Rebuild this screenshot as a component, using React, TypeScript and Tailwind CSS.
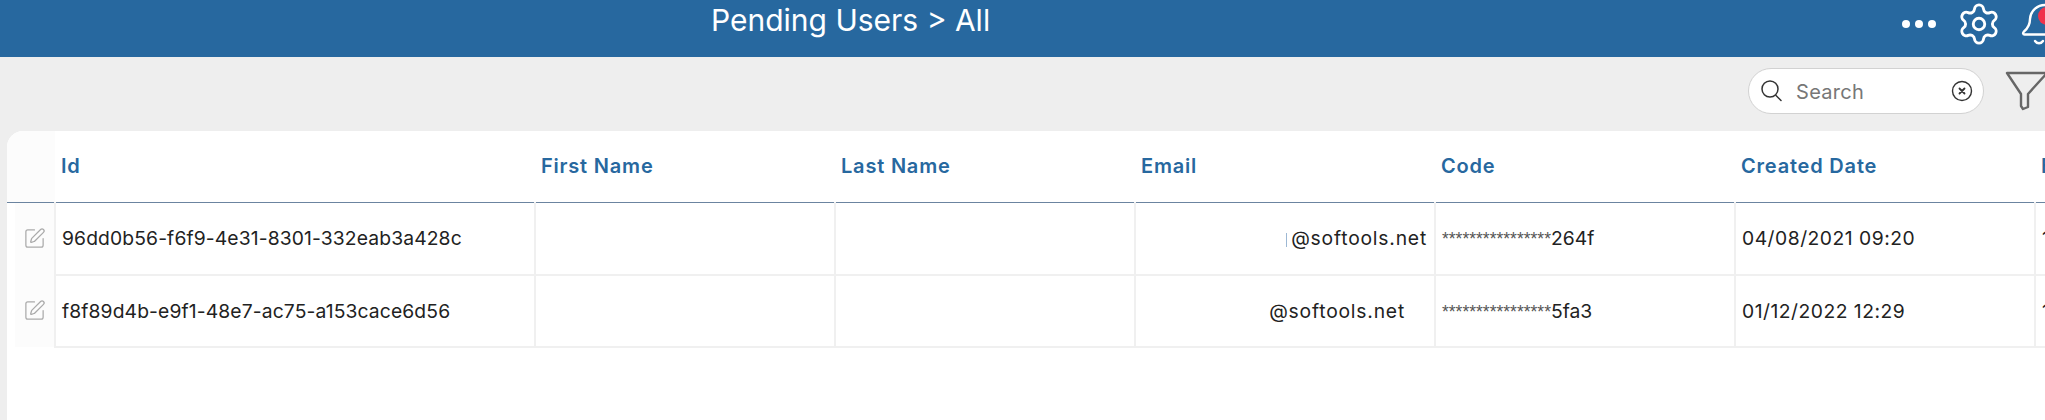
import { Settings, SquarePen } from "lucide-react";

const COLUMNS = ["First Name", "Last Name", "Email", "Code", "Created Date", "Expiry Date"];

const ROWS = [
  { id: "96dd0b56-f6f9-4e31-8301-332eab3a428c", email: "@softools.net", emailPad: "pr-[7px]", mark: true, stars: "****************", code: "264f", created: "04/08/2021 09:20", expiry: "11/08/2021 09:20" },
  { id: "f8f89d4b-e9f1-48e7-ac75-a153cace6d56", email: "@softools.net", emailPad: "pr-[29px]", mark: false, stars: "****************", code: "5fa3", created: "01/12/2022 12:29", expiry: "18/12/2022 12:29" },
];

function TopBar() {
  return (
    <div className="flex h-[57px] items-start overflow-hidden bg-[#27689f] text-white">
      <div className="ml-[711px] w-[1180px] shrink-0 text-[30px] leading-[40px]">Pending Users &gt; All</div>
      <div className="ml-[11px] mt-[20px] flex shrink-0 gap-[5px]">
        <span className="h-[8px] w-[8px] rounded-full bg-white" />
        <span className="h-[8px] w-[8px] rounded-full bg-white" />
        <span className="h-[8px] w-[8px] rounded-full bg-white" />
      </div>
      <Settings className="ml-[20px] mt-[1px] shrink-0" size={46} strokeWidth={1.5} />
      <div className="relative ml-[18px] mt-[1px] h-[48px] w-[44px] shrink-0">
        <svg width="44" height="48" viewBox="0 0 44 48" fill="none" stroke="currentColor" strokeWidth="2.4" strokeLinecap="round" strokeLinejoin="round">
          <path d="M26 4a15 15 0 0 0-16 14c0 7-3 10-6 12.500-1.500 1.500-1 3 .5 3h37" />
          <path d="M15 40c2 3 6 3 8 0" />
        </svg>
        <span className="absolute left-[18px] top-[6px] h-[18px] w-[18px] rounded-full bg-[#f0324b]" />
      </div>
    </div>
  );
}

function Toolbar() {
  return (
    <div className="flex h-[74px] items-start overflow-hidden pl-[1748px] pt-[11px]">
      <div className="flex h-[46px] w-[236px] shrink-0 items-center rounded-full border border-[#d2d2d2] bg-white pl-[11px] pr-[10px]">
        <svg width="22" height="24" viewBox="0 0 22 24" fill="none" stroke="#333" strokeWidth="1.5" strokeLinecap="round">
          <circle cx="10" cy="10" r="8" />
          <path d="M16 16.500l5 5" />
        </svg>
        <span className="ml-[14px] flex-1 pt-[2px] text-[20px] tracking-[0.3px] text-[#777]">Search</span>
        <svg width="22" height="22" viewBox="0 0 22 22" fill="none" stroke="#333" strokeLinecap="round">
          <circle cx="11" cy="11" r="9.500" strokeWidth="1.400" />
          <path d="M8.500 8.500l5 5M13.500 8.500l-5 5" strokeWidth="1.800" />
        </svg>
      </div>
      <svg className="ml-[21px] mt-[3px] shrink-0" width="44" height="40" viewBox="0 0 44 40" fill="none" stroke="#666" strokeWidth="2.400" strokeLinejoin="round">
        <path d="M2 2h40L23 23v13l-5 2-2-3V23z" />
      </svg>
    </div>
  );
}

function UsersTable() {
  return (
    <div className="ml-[7px] h-[289px] overflow-hidden rounded-tl-[16px] bg-white">
      <table className="w-[2338px] table-fixed border-collapse text-left">
        <colgroup>
          <col className="w-[48px]" />
          <col className="w-[480px]" />
          <col className="w-[300px]" />
          <col className="w-[300px]" />
          <col className="w-[300px]" />
          <col className="w-[300px]" />
          <col className="w-[300px]" />
          <col className="w-[310px]" />
        </colgroup>
        <thead>
          <tr className="h-[71px] border-b-[1.500px] border-[#6b84a0] text-[20px] tracking-[0.8px] text-[#27689f]">
            <th className="bg-[#fcfcfc]" />
            <th className="pb-[1px] pl-[6px] font-semibold">Id</th>
            {COLUMNS.map((c) => (
              <th key={c} className="pb-[1px] pl-[6px] font-semibold">{c}</th>
            ))}
          </tr>
        </thead>
        <tbody className="text-[19.3px] text-[#222]">
          {ROWS.map((r) => (
            <tr key={r.id} className="h-[72px]">
              <td className="border-r-2 border-[#f0f0f0] p-0">
                <div className="ml-[8px] flex h-[72px] items-center bg-[#fcfcfc] pl-[8px]">
                  <SquarePen size={23} strokeWidth={1.300} className="text-[#aaaaaa]" />
                </div>
              </td>
              <td className="border-b-2 border-r-2 border-[#f0f0f0] pl-[6px] pt-[1px] tracking-[0.12px]">{r.id}</td>
              <td className="border-b-2 border-r-2 border-[#f0f0f0]" />
              <td className="border-b-2 border-r-2 border-[#f0f0f0]" />
              <td className={`border-b-2 border-r-2 border-[#f0f0f0] pt-[1px] text-right tracking-[0.8px] ${r.emailPad}`}>
                {r.mark && <span className="mr-[4px] inline-block h-[14px] w-[1px] bg-[#9db8d4] align-middle" />}
                {r.email}
              </td>
              <td className="border-b-2 border-r-2 border-[#f0f0f0] pl-[6px] pt-[1px]">
                <span className="font-['Liberation_Sans',sans-serif] text-[17.5px] text-[#555]">{r.stars}</span>
                {r.code}
              </td>
              <td className="border-b-2 border-r-2 border-[#f0f0f0] pl-[6px] pt-[1px] tracking-[0.5px]">{r.created}</td>
              <td className="border-b-2 border-[#f0f0f0] pl-[6px] pt-[1px]">{r.expiry}</td>
            </tr>
          ))}
        </tbody>
      </table>
    </div>
  );
}

export default function App() {
  return (
    <div className="h-[420px] w-[2045px] overflow-hidden bg-[#eeeeee] font-['Inter',sans-serif]">
      <TopBar />
      <Toolbar />
      <UsersTable />
    </div>
  );
}
